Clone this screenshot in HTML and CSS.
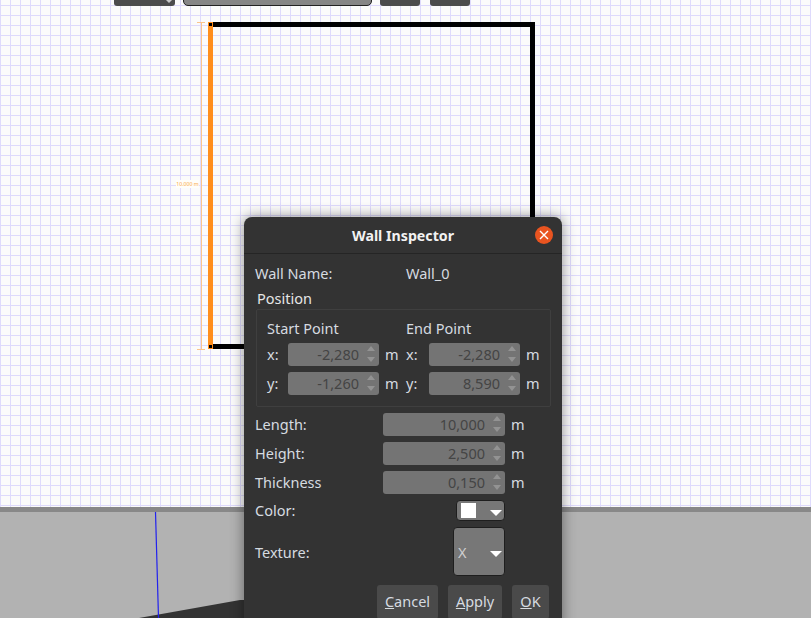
FILE: index.html
```html
<!DOCTYPE html>
<html lang="en">
<head>
  <meta charset="UTF-8" />
  <title>Wall Inspector</title>
  <link rel="stylesheet" href="styles.css">
</head>
<body>
  <div class="app">
    <div class="plan">
      <div class="toolbar">
        <div class="tool tool-combo"><span class="tool-arrow"></span></div>
        <div class="tool tool-field"></div>
        <div class="tool tool-small"></div>
        <div class="tool tool-small"></div>
      </div>

      <!-- walls on the drawing canvas -->
      <div class="wall wall-top"></div>
      <div class="wall wall-right"></div>
      <div class="wall wall-bottom"></div>
      <div class="wall wall-selected"></div>
      <div class="handle handle-start"></div>
      <div class="handle handle-end"></div>
      <div class="dim-line"></div>
      <div class="dim-tick dim-tick-top"></div>
      <div class="dim-tick dim-tick-bottom"></div>
      <div class="dim-label">10.000 m</div>
    </div>
    <div class="divider"></div>
    <div class="view3d">
      <svg class="scene" width="811" height="106" viewBox="0 0 811 106">
        <polygon points="139,106 240,88 260,88 260,106" fill="#333333" />
        <line x1="155.5" y1="0" x2="158.5" y2="106" stroke="#2222ee" stroke-width="1.2" />
      </svg>
    </div>
  </div>

  <div class="dialog">
    <div class="titlebar">
      <span class="title">Wall Inspector</span>
      <span class="close">
        <svg width="10" height="10" viewBox="0 0 10 10">
          <path d="M1 1L9 9M9 1L1 9" stroke="#fff" stroke-width="1.4" fill="none" />
        </svg>
      </span>
    </div>

    <div class="content">
      <div class="name-row">
        <span class="name-label">Wall Name:</span>
        <span>Wall_0</span>
      </div>
      <div class="group-title">Position</div>
      <div class="group">
        <div class="point">
          <div class="point-title">Start Point</div>
          <div class="coord">
            <span class="axis">x:</span>
            <div class="spin spin-small">-2,280<span class="arrows"></span></div>
            <span class="unit">m</span>
          </div>
          <div class="coord">
            <span class="axis">y:</span>
            <div class="spin spin-small">-1,260<span class="arrows"></span></div>
            <span class="unit">m</span>
          </div>
        </div>
        <div class="point point-end">
          <div class="point-title">End Point</div>
          <div class="coord">
            <span class="axis">x:</span>
            <div class="spin spin-small">-2,280<span class="arrows"></span></div>
            <span class="unit">m</span>
          </div>
          <div class="coord">
            <span class="axis">y:</span>
            <div class="spin spin-small">8,590<span class="arrows"></span></div>
            <span class="unit">m</span>
          </div>
        </div>
      </div>

      <div class="field-row">
        <span class="field-label">Length:</span>
        <div class="spin spin-wide">10,000<span class="arrows"></span></div>
        <span class="unit">m</span>
      </div>
      <div class="field-row">
        <span class="field-label">Height:</span>
        <div class="spin spin-wide">2,500<span class="arrows"></span></div>
        <span class="unit">m</span>
      </div>
      <div class="field-row">
        <span class="field-label">Thickness</span>
        <div class="spin spin-wide">0,150<span class="arrows"></span></div>
        <span class="unit">m</span>
      </div>

      <div class="color-row">
        <span class="field-label">Color:</span>
        <div class="combo combo-color"><span class="swatch"></span><span class="combo-arrow"></span></div>
      </div>
      <div class="texture-row">
        <span class="field-label">Texture:</span>
        <div class="combo combo-texture"><span class="texture-text">X</span><span class="combo-arrow"></span></div>
      </div>

      <div class="buttons">
        <button class="btn btn-cancel"><u>C</u>ancel</button>
        <button class="btn btn-apply"><u>A</u>pply</button>
        <button class="btn btn-ok"><u>O</u>K</button>
      </div>
    </div>
  </div>
</body>
</html>
```

FILE: styles.css
```css
* {
  margin: 0; padding: 0;
  box-sizing: border-box;
  font-family: 'Noto Sans', sans-serif;
}
html, body {
  height: 100%;
  overflow: hidden;
}
body {
  position: relative;
  background-color: #b2b2b2;
  font-size: 14.5px;
  color: #d6dbe0;
}
.app {
  display: flex;
  flex-direction: column;
  height: 618px;
}

/* plan canvas */
.plan {
  position: relative;
  height: 507px;
  overflow: hidden;
  background-color: #fbfbfb;
  background-image:
    linear-gradient(to right, #dedafc 1px, transparent 1px),
    linear-gradient(to bottom, #dedafc 1px, transparent 1px);
  background-size: 10px 10px;
  background-position: 0 5px;
}
.toolbar {
  display: flex;
  height: 6px;
  padding-left: 114px;
  align-items: flex-end;
}
.tool {
  height: 14px;
  border-radius: 0 0 3px 3px;
  background-color: #4c4c4c;
}
.tool-combo {
  position: relative;
  width: 61px;
  margin-right: 8px;
}
.tool-arrow {
  position: absolute;
  right: 1px;
  bottom: 3px;
  width: 0;
  height: 0;
  border: 5px solid transparent;
  border-top: 5px solid #c8c8c8;
  border-bottom: 0;
}
.tool-field {
  width: 189px;
  margin-right: 8px;
  background-color: #868686;
  border: 1px solid #222;
  border-radius: 0 0 5px 5px;
}
.tool-small {
  width: 40px;
  margin-right: 10px;
}

.wall {
  position: absolute;
  background-color: #000;
}
.wall-top { left: 208px; top: 22px; width: 327px; height: 5px; }
.wall-right { left: 530px; top: 22px; width: 5px; height: 327px; }
.wall-bottom { left: 208px; top: 344px; width: 327px; height: 5px; }
.wall-selected { left: 208px; top: 22px; width: 5px; height: 327px; background-color: #ff8e1c; }
.handle {
  position: absolute;
  left: 209px;
  width: 3px;
  height: 3px;
  background-color: #000;
}
.handle-start { top: 23px; }
.handle-end { top: 345px; }
.dim-line {
  position: absolute;
  left: 201px;
  top: 22px;
  width: 1px;
  height: 327px;
  background-color: #fbc48c;
}
.dim-tick {
  position: absolute;
  left: 197px;
  width: 8px;
  height: 1px;
  background-color: #fbc48c;
}
.dim-tick-top { top: 22px; }
.dim-tick-bottom { top: 349px; }
.dim-label {
  position: absolute;
  left: 176px;
  top: 180px;
  width: 23px;
  height: 8px;
  background-color: #fffefa;
  color: #f9a846;
  font-size: 5.2px;
  line-height: 8px;
  text-align: center;
}

.divider {
  height: 5px;
  background-color: #888;
}
.view3d {
  flex: 1;
  background-color: #b2b2b2;
}
.scene {
  display: block;
}

/* dialog window */
.dialog {
  position: absolute;
  left: 244px;
  top: 217px;
  width: 318px;
  height: 420px;
  border-radius: 8px 8px 0 0;
  background-color: #333;
  box-shadow: 0 0 14px rgba(0,0,0,0.45);
}
.titlebar {
  position: relative;
  height: 37px;
  display: flex;
  align-items: center;
  justify-content: center;
  border-bottom: 1px solid #252525;
}
.title {
  font-weight: bold;
  font-size: 14.2px;
  color: #f2f2f2;
}
.close {
  position: absolute;
  right: 9px;
  top: 9px;
  width: 18px;
  height: 18px;
  border-radius: 50%;
  background-color: #e95420;
  display: flex;
  align-items: center;
  justify-content: center;
}
.content {
  display: flex;
  flex-direction: column;
  padding: 9px 11px 0 11px;
}
.name-row {
  display: flex;
  height: 20px;
  align-items: center;
}
.name-label {
  width: 151px;
}
.group-title {
  height: 20px;
  margin-top: 5px;
  margin-bottom: 1px;
  margin-left: 2px;
  line-height: 20px;
  color: #e6e6e6;
}
.group {
  display: flex;
  width: 295px;
  height: 98px;
  margin-left: 1px;
  padding: 10px 0 0 10px;
  border: 1px solid #3f3f3f;
  border-radius: 2px;
}
.point {
  width: 139px;
}
.point-title {
  height: 17px;
  line-height: 16px;
}
.coord {
  display: flex;
  align-items: center;
  height: 23px;
  margin-top: 6px;
}
.axis {
  width: 21px;
  padding-bottom: 2px;
}
.point-end .axis {
  width: 23px;
}
.unit {
  margin-left: 6px;
  padding-bottom: 2px;
}
.spin {
  position: relative;
  height: 23px;
  padding-right: 20px;
  border-radius: 3px;
  background-color: #747474;
  color: #444;
  line-height: 22px;
  text-align: right;
}
.spin-small {
  width: 91px;
}
.spin-wide {
  width: 122px;
}
.arrows::before, .arrows::after {
  content: "";
  position: absolute;
  right: 4px;
  width: 0;
  height: 0;
  border-left: 4px solid transparent;
  border-right: 4px solid transparent;
}
.arrows::before {
  top: 3px;
  border-bottom: 5px solid #939393;
}
.arrows::after {
  bottom: 4px;
  border-top: 5px solid #939393;
}
.field-row {
  display: flex;
  align-items: center;
  height: 23px;
  margin-bottom: 6px;
}
.group + .field-row {
  margin-top: 6px;
}
.field-label {
  width: 128px;
  padding-bottom: 2px;
}
.color-row {
  display: flex;
  align-items: center;
  height: 21px;
}
.combo {
  position: relative;
  border: 1px solid #1e1e1e;
  border-radius: 4px;
  background-color: #777;
}
.combo-color {
  width: 49px;
  height: 21px;
  margin-left: 73px;
}
.swatch {
  position: absolute;
  left: 4px;
  top: 2px;
  width: 15px;
  height: 15px;
  background-color: #fff;
}
.combo-arrow {
  position: absolute;
  right: 2px;
  bottom: 4px;
  width: 0;
  height: 0;
  border-left: 6px solid transparent;
  border-right: 6px solid transparent;
  border-top: 6px solid #fff;
}
.texture-row {
  display: flex;
  align-items: center;
  height: 49px;
  margin-top: 6px;
}
.texture-row .field-label {
  padding-bottom: 0;
}
.combo-texture {
  width: 52px;
  height: 49px;
  margin-left: 70px;
}
.combo-texture .combo-arrow {
  bottom: 18px;
}
.texture-text {
  position: absolute;
  left: 4px;
  top: 14px;
  color: #cfcfcf;
}
.buttons {
  display: flex;
  justify-content: flex-end;
  gap: 10px;
  margin-top: 9px;
  padding-right: 2px;
}
.btn {
  height: 34px;
  padding-bottom: 2px;
  border: none;
  border-radius: 3px;
  background-color: #4a4a4a;
  color: #d6dbe0;
  font-size: 14.5px;
  text-align: center;
}
.btn-cancel { width: 61px; }
.btn-apply { width: 54px; }
.btn-ok { width: 37px; }
```
